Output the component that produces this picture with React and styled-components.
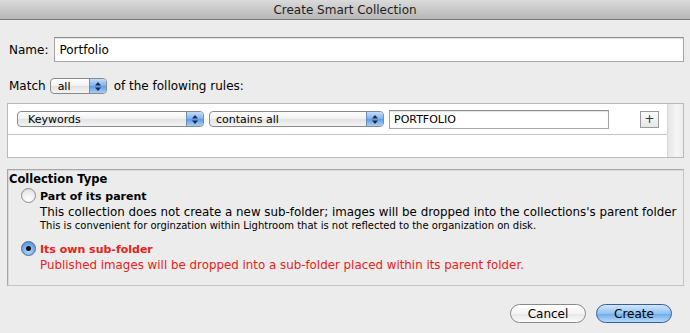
import React from "react";
import styled, { createGlobalStyle } from "styled-components";

const GlobalStyle = createGlobalStyle`
  body {
    margin: 0;
    background: #ececec;
    font-family: "DejaVu Sans", "Liberation Sans", sans-serif;
    color: #000;
  }
`;

const Window = styled.div`
  width: 690px;
  height: 333px;
  background: #ececec;
  display: flex;
  flex-direction: column;
  overflow: hidden;
`;

const TitleBar = styled.div`
  height: 19px;
  flex: none;
  background: linear-gradient(#dadada, #b7b7b7);
  border-bottom: 1px solid #7a7a7a;
  display: flex;
  align-items: center;
  justify-content: center;
  font-size: 12px;
  color: #1e1e1e;
`;

const Body = styled.div`
  width: 690px;
  box-sizing: border-box;
  padding: 17px 6px 0 7px;
  display: flex;
  flex-direction: column;
`;

const Row = styled.div`
  display: flex;
  align-items: center;
  font-size: 12px;
  margin-top: ${p => p.top || 0}px;
`;

const Label = styled.span`
  margin-left: 2px;
  margin-right: ${p => p.gap || 6}px;
`;

const TextField = styled.div`
  flex: ${p => (p.width ? "none" : 1)};
  width: ${p => (p.width ? p.width + "px" : "auto")};
  height: ${p => p.height || 25}px;
  box-sizing: border-box;
  background: #fff;
  border: 1px solid #a5a5a5;
  border-top-color: #8e8e8e;
  box-shadow: inset 0 1px 1px rgba(0, 0, 0, 0.12);
  display: flex;
  align-items: center;
  padding-left: 4px;
  font-size: ${p => p.size || 12}px;
`;

const Popup = styled.div`
  flex: none;
  width: ${p => p.width}px;
  height: ${p => p.height || 16}px;
  box-sizing: border-box;
  border: 1px solid #8a8a8a;
  border-radius: 4px;
  background: linear-gradient(#ffffff, #f1f1f1 50%, #e2e2e2 51%, #f4f4f4);
  display: flex;
  align-items: center;
  font-size: 11px;
  overflow: hidden;
`;

const PopupText = styled.span`
  flex: 1;
  padding-left: ${p => p.pad || 10}px;
`;

const Stepper = styled.div`
  width: 16px;
  align-self: stretch;
  background: linear-gradient(#c3dcf7, #7fb1ec 50%, #5c9ae4 51%, #a7cdf6);
  border-left: 1px solid #6b8fbd;
  display: flex;
  align-items: center;
  justify-content: center;
`;

const Arrows = () => (
  <svg width="6" height="9" viewBox="0 0 6 9">
    <path d="M3 0 L6 3.5 H0 Z" fill="#1a2a44" />
    <path d="M3 9 L6 5.5 H0 Z" fill="#1a2a44" />
  </svg>
);

const RulesBox = styled.div`
  margin-top: 9px;
  height: 55px;
  box-sizing: border-box;
  border: 1px solid #b9b9b9;
  background: #fff;
  display: flex;
`;

const RuleList = styled.div`
  flex: 1;
  min-width: 0;
  display: flex;
  flex-direction: column;
`;

const RuleRow = styled.div`
  height: 31px;
  box-sizing: border-box;
  border-bottom: 1px solid #c4c4c4;
  display: flex;
  align-items: center;
  padding-left: 9px;
  gap: 5px;
`;

const PlusButton = styled.div`
  flex: none;
  width: 19px;
  height: 17px;
  box-sizing: border-box;
  margin-left: 26px;
  border: 1px solid #9a9a9a;
  background: linear-gradient(#fdfdfd, #e6e6e6);
  display: flex;
  align-items: center;
  justify-content: center;
  font-size: 12px;
  color: #333;
`;

const ScrollTrack = styled.div`
  flex: none;
  width: 15px;
  border-left: 1px solid #d6d6d6;
  background: linear-gradient(90deg, #e6e6e6, #f6f6f6 60%, #ececec);
`;

const TypeBox = styled.div`
  margin-top: 11px;
  height: 117px;
  box-sizing: border-box;
  border: 1px solid #a8a8a8;
  border-right-color: #c4c4c4;
  border-bottom-color: #c4c4c4;
  box-shadow: 1px 1px 0 #d9d9d9 inset;
  padding: 2px 0 0 1px;
`;

const TypeTitle = styled.div`
  font-weight: bold;
  font-size: 11.5px;
  line-height: 15px;
`;

const Option = styled.div`
  display: flex;
  align-items: flex-start;
  margin: ${p => p.top || 0}px 0 0 12px;
  color: ${p => (p.active ? "#e8211a" : "#000")};
`;

const Radio = styled.div`
  width: 15px;
  height: 15px;
  box-sizing: border-box;
  border-radius: 50%;
  margin-top: 0;
  margin-right: 4px;
  flex: none;
  border: 1px solid ${p => (p.checked ? "#4a6c9c" : "#8d8d8d")};
  background: ${p =>
    p.checked
      ? "radial-gradient(circle at 50% 70%, #b8d8fa, #6ea6e6 60%, #4a83cf)"
      : "radial-gradient(circle at 50% 80%, #ffffff, #ececec 60%, #cfcfcf)"};
  display: flex;
  align-items: center;
  justify-content: center;
  &::after {
    content: "";
    display: ${p => (p.checked ? "block" : "none")};
    width: 5px;
    height: 5px;
    border-radius: 50%;
    background: #111;
  }
`;

const OptionText = styled.div`
  display: flex;
  flex-direction: column;
`;

const OptionTitle = styled.div`
  font-weight: bold;
  font-size: 11px;
  line-height: 17px;
`;

const OptionLine = styled.div`
  font-size: ${p => p.size || 11.85}px;
  line-height: ${p => p.lh || 15}px;
  white-space: nowrap;
`;

const ButtonRow = styled.div`
  margin-top: 18px;
  display: flex;
  justify-content: flex-end;
  gap: 10px;
  padding-right: 12px;
`;

const AquaButton = styled.div`
  width: ${p => p.width}px;
  height: 19px;
  box-sizing: border-box;
  border-radius: 10px;
  display: flex;
  align-items: center;
  justify-content: center;
  font-size: 12px;
  border: 1px solid ${p => (p.primary ? "#3a5f96" : "#8a8a8a")};
  background: ${p =>
    p.primary
      ? "linear-gradient(#d2e7fb, #8fc2f2 50%, #6caae9 51%, #b3dafc)"
      : "linear-gradient(#ffffff, #f4f4f4 50%, #e6e6e6 51%, #fbfbfb)"};
`;

const Trailing = styled.span`
  margin-left: 7px;
`;

export default function App() {
  return (
    <Window>
      <GlobalStyle />
      <TitleBar>Create Smart Collection</TitleBar>
      <Body>
        <Row>
          <Label>Name:</Label>
          <TextField>Portfolio</TextField>
        </Row>
        <Row top={16}>
          <Label gap={4}>Match</Label>
          <Popup width={57}>
            <PopupText pad={7}>all</PopupText>
            <Stepper>
              <Arrows />
            </Stepper>
          </Popup>
          <Trailing>of the following rules:</Trailing>
        </Row>
        <RulesBox>
          <RuleList>
            <RuleRow>
              <Popup width={187}>
                <PopupText>Keywords</PopupText>
                <Stepper>
                  <Arrows />
                </Stepper>
              </Popup>
              <Popup width={175}>
                <PopupText pad={6}>contains all</PopupText>
                <Stepper>
                  <Arrows />
                </Stepper>
              </Popup>
              <TextField width={220} height={19} size={11}>
                PORTFOLIO
              </TextField>
              <PlusButton>+</PlusButton>
            </RuleRow>
          </RuleList>
          <ScrollTrack />
        </RulesBox>
        <TypeBox>
          <TypeTitle>Collection Type</TypeTitle>
          <Option top={1}>
            <Radio />
            <OptionText>
              <OptionTitle>Part of its parent</OptionTitle>
              <OptionLine>
                This collection does not create a new sub-folder; images will be dropped into the collections's parent folder
              </OptionLine>
              <OptionLine size={10} lh={12}>
                This is convenient for orginzation within Lightroom that is not reflected to the organization on disk.
              </OptionLine>
            </OptionText>
          </Option>
          <Option top={9} active>
            <Radio checked />
            <OptionText>
              <OptionTitle>Its own sub-folder</OptionTitle>
              <OptionLine>
                Published images will be dropped into a sub-folder placed within its parent folder.
              </OptionLine>
            </OptionText>
          </Option>
        </TypeBox>
        <ButtonRow>
          <AquaButton width={76}>Cancel</AquaButton>
          <AquaButton width={76} primary>
            Create
          </AquaButton>
        </ButtonRow>
      </Body>
    </Window>
  );
}
